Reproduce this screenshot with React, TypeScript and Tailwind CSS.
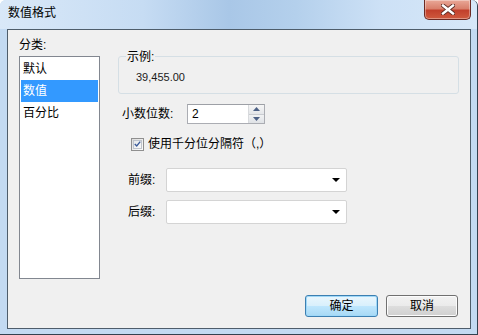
import { useState } from 'react';

const ITEMS = ['默认', '数值', '百分比'];

const FONT = "font-['Liberation_Sans','Noto_Sans_CJK_SC',sans-serif]";

function CloseButton() {
  return (
    <div className="mr-[6px] w-[47px] h-[20px] rounded-b-[5px] border border-t-0 border-[#6b2a24] bg-[linear-gradient(180deg,#e9a898_0%,#d9806c_45%,#c2402c_55%,#cf5a3e_100%)] shadow-[inset_0_0_0_1px_rgba(255,255,255,0.35)] flex items-center justify-center">
      <svg width="14" height="11" viewBox="0 0 14 11">
        <path d="M2 1.5 L12 9.5 M12 1.5 L2 9.5" stroke="#5a2a22" strokeWidth="4.2" strokeLinecap="square" />
        <path d="M2 1.5 L12 9.5 M12 1.5 L2 9.5" stroke="#ffffff" strokeWidth="2.4" strokeLinecap="square" />
      </svg>
    </div>
  );
}

function Spin({ value }: { value: string }) {
  return (
    <div className="w-[78px] h-[20px] border border-[#abadb3] border-t-[#9da0a6] bg-white flex">
      <span className="flex-1 pl-[4px] text-[12px] leading-[18px] text-black">{value}</span>
      <div className="w-[16px] flex flex-col border-l border-[#d8dadd]">
        <div className="flex-1 bg-[linear-gradient(180deg,#f6f6f6,#e4e6e9)] border-b border-[#c9ccd1] flex items-center justify-center">
          <svg width="7" height="4" viewBox="0 0 7 4"><path d="M0 4 L3.5 0 L7 4 Z" fill="#4d6185" /></svg>
        </div>
        <div className="flex-1 bg-[linear-gradient(180deg,#f1f2f3,#dfe2e6)] flex items-center justify-center">
          <svg width="7" height="4" viewBox="0 0 7 4"><path d="M0 0 L7 0 L3.5 4 Z" fill="#4d6185" /></svg>
        </div>
      </div>
    </div>
  );
}

function Combo() {
  return (
    <div className="w-[181px] h-[24px] rounded-[2px] border border-[#d4d4d4] bg-white flex items-center justify-end pr-[6px]">
      <svg width="8" height="4" viewBox="0 0 8 4"><path d="M0 0 L8 0 L4 4 Z" fill="#000" /></svg>
    </div>
  );
}

export default function App() {
  const [sel, setSel] = useState(1);
  const [thousands, setThousands] = useState(true);

  return (
    <div className={`w-[478px] h-[335px] flex flex-col border-r border-b border-[#33414f] rounded-t-[6px] bg-[#c3daf2] text-[12px] ${FONT}`}>
      {/* title bar */}
      <div className="h-[29px] flex items-start rounded-t-[6px] bg-[linear-gradient(90deg,#d9e8f8_0%,#c6dcf3_30%,#a9c7e7_48%,#b4d0ec_62%,#cde1f6_80%,#d6e7f8_100%)]">
        <span className="pl-[8px] pt-[5px] leading-[16px] text-black">数值格式</span>
        <div className="ml-auto"><CloseButton /></div>
      </div>

      {/* client area */}
      <div className="ml-[7px] mr-[6px] h-[300px] border border-[#4e5d6b] bg-[#f0f0f0] flex">
        <div className="pl-[11px] pt-[7px] flex flex-col">
          <span className="leading-[16px] text-black">分类:</span>
          <div className="mt-[3px] w-[81px] h-[223px] border border-[#828790] bg-white p-[1px]">
            {ITEMS.map((it, i) => (
              <div key={it} onClick={() => setSel(i)}
                className={`h-[22px] pl-[2px] leading-[22px] ${sel === i ? 'bg-[#3399ff] text-white' : 'text-black'}`}>
                {it}
              </div>
            ))}
          </div>
        </div>

        <div className="ml-[18px] pt-[26px] pb-[11px] flex-1 pr-[11px] flex flex-col">
          <div className="relative h-[38px] rounded-[3px] border border-[#d5dfe5] pt-[11px] pl-[17px]">
            <span className="absolute left-[7px] top-[-8px] px-[1px] leading-[16px] bg-[#f0f0f0] text-black">示例:</span>
            <span className="text-[11px] leading-[14px] text-[#1b1b1b]">39,455.00</span>
          </div>

          <div className="mt-[10px] pl-[4px] flex items-center">
            <span className="w-[65px] leading-[16px] text-black">小数位数:</span>
            <Spin value="2" />
          </div>

          <div className="mt-[12px] pl-[13px] flex items-center gap-[4px]" onClick={() => setThousands(!thousands)}>
            <div className="w-[13px] h-[13px] border border-[#8f8f8f] bg-[linear-gradient(135deg,#dcdcdc,#fdfdfd)] p-[1px]">
              <div className="w-full h-full border border-[#bfc4cc] bg-[linear-gradient(135deg,#e6e8ea,#fafafa)] flex items-center justify-center">
                {thousands && (
                  <svg width="9" height="8" viewBox="0 0 9 8"><path d="M1 4 L3.5 6.5 L8 1" stroke="#3a5a9a" strokeWidth="1.8" fill="none" /></svg>
                )}
              </div>
            </div>
            <span className="leading-[16px] text-black">使用千分位分隔符（,）</span>
          </div>

          <div className="mt-[16px] pl-[10px] flex items-center">
            <span className="w-[38px] leading-[16px] text-black">前缀:</span>
            <Combo />
          </div>
          <div className="mt-[8px] pl-[10px] flex items-center">
            <span className="w-[38px] leading-[16px] text-black">后缀:</span>
            <Combo />
          </div>

          <div className="mt-auto mr-[1px] flex justify-end gap-[8px]">
            <button className="w-[73px] h-[22px] rounded-[3px] border border-[#3c7fb1] bg-[linear-gradient(180deg,#eaf6fd_0%,#d9f0fc_48%,#bee6fd_52%,#a7d9f5_100%)] shadow-[inset_0_0_0_1px_#9fd8f8] text-black leading-[20px]">
              确定
            </button>
            <button className="w-[72px] h-[22px] rounded-[3px] border border-[#707070] bg-[linear-gradient(180deg,#f2f2f2_0%,#ebebeb_48%,#dddddd_52%,#cfcfcf_100%)] shadow-[inset_0_0_0_1px_#fcfcfc] text-black leading-[20px]">
              取消
            </button>
          </div>
        </div>
      </div>
    </div>
  );
}
